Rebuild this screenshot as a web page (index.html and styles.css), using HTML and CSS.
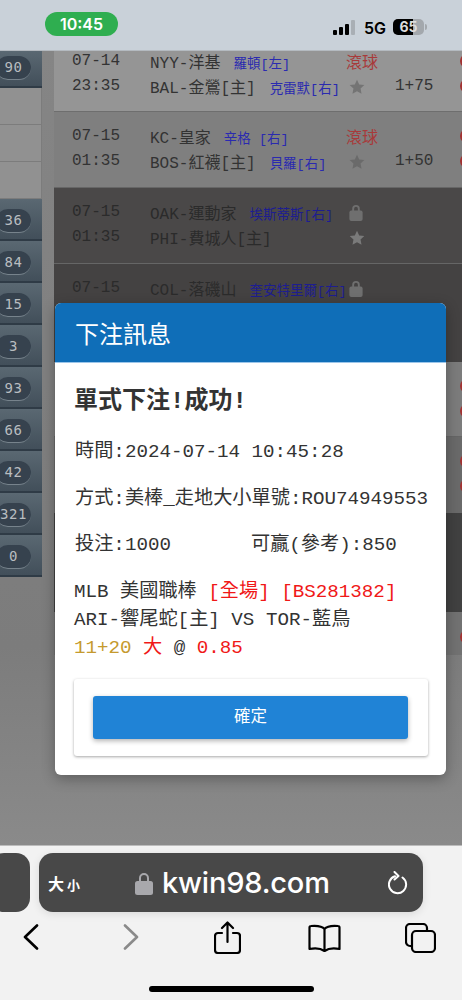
FILE: index.html
```html
<!DOCTYPE html>
<html lang="zh-Hant">
<head>
<meta charset="utf-8">
<title>下注訊息</title>
<link rel="stylesheet" href="styles.css">
</head>
<body>

<div class="status_bar">
	<div class="status_time">10:45</div>
	<div class="status_right">
		<svg class="status_signal" width="23" height="15" viewBox="0 0 23 15">
			<rect x="0" y="10" width="4" height="5" rx="1" fill="#000"/>
			<rect x="6" y="7" width="4" height="8" rx="1" fill="#000"/>
			<rect x="12" y="4" width="4" height="11" rx="1" fill="#000"/>
			<rect x="18" y="0" width="4" height="15" rx="1" fill="#a9afb5"/>
		</svg>
		<span class="status_net">5G</span>
		<div class="status_batt"><div class="status_fill"></div><span class="status_pct">65</span></div>
		<div class="status_tip"></div>
	</div>
</div>

<div class="page">
	<div class="side">
		<div class="side_dark side_first"><span class="badge">90</span></div>
		<div class="side_light"></div>
		<div class="side_light"></div>
		<div class="side_light"></div>
		<div class="side_dark"><span class="badge">36</span></div>
		<div class="side_dark"><span class="badge">84</span></div>
		<div class="side_dark"><span class="badge">15</span></div>
		<div class="side_dark"><span class="badge">3</span></div>
		<div class="side_dark"><span class="badge">93</span></div>
		<div class="side_dark"><span class="badge">66</span></div>
		<div class="side_dark"><span class="badge">42</span></div>
		<div class="side_dark"><span class="badge">321</span></div>
		<div class="side_dark"><span class="badge">0</span></div>
	</div>

	<div class="list">
		<div class="row row_a">
			<div class="date">07-14</div>
			<div class="team">NYY-洋基<span class="pitcher p_gap1">羅頓[左]</span></div>
			<div class="live">滾球</div>
			<div></div>
			<div class="dot"></div>
			<div class="date">23:35</div>
			<div class="team">BAL-金鶯[主]<span class="pitcher p_gap2">克雷默[右]</span></div>
			<div class="ico"><svg class="star" viewBox="0 0 24 24"><path d="M12 1l3.3 7.2 7.7.9-5.7 5.3 1.5 7.8L12 18.400l-6.800 3.800 1.500-7.800L1 9.100l7.700-.9z"/></svg></div>
			<div class="score">1+75</div>
			<div class="dot"></div>
		</div>
		<div class="row row_b">
			<div class="date">07-15</div>
			<div class="team">KC-皇家<span class="pitcher p_gap3">辛格 [右]</span></div>
			<div class="live">滾球</div>
			<div></div>
			<div class="dot"></div>
			<div class="date">01:35</div>
			<div class="team">BOS-紅襪[主]<span class="pitcher p_gap2">貝羅[右]</span></div>
			<div class="ico"><svg class="star" viewBox="0 0 24 24"><path d="M12 1l3.3 7.2 7.7.9-5.7 5.3 1.500 7.800L12 18.400l-6.800 3.800 1.500-7.800L1 9.100l7.700-.9z"/></svg></div>
			<div class="score">1+50</div>
			<div class="dot"></div>
		</div>
		<div class="row row_c">
			<div class="date">07-15</div>
			<div class="team">OAK-運動家<span class="pitcher p_gap1">埃斯蒂斯[右]</span></div>
			<div class="ico"><svg class="lock" viewBox="0 0 14 18"><path d="M3 8V5a4 4 0 0 1 8 0v3h-2V5a2 2 0 0 0-4 0v3z"/><rect y="7" width="14" height="11" rx="2"/></svg></div>
			<div></div>
			<div></div>
			<div class="date">01:35</div>
			<div class="team">PHI-費城人[主]</div>
			<div class="ico"><svg class="star" viewBox="0 0 24 24"><path d="M12 1l3.3 7.2 7.7.9-5.7 5.300 1.500 7.800L12 18.400l-6.800 3.800 1.500-7.800L1 9.100l7.700-.9z"/></svg></div>
			<div></div>
			<div></div>
		</div>
		<div class="row row_d">
			<div class="date">07-15</div>
			<div class="team">COL-落磯山<span class="pitcher p_gap1">奎安特里爾[右]</span></div>
			<div class="ico"><svg class="lock" viewBox="0 0 14 18"><path d="M3 8V5a4 4 0 0 1 8 0v3h-2V5a2 2 0 0 0-4 0v3z"/><rect y="7" width="14" height="11" rx="2"/></svg></div>
		</div>
		<div class="row row_e"><div class="dot dot_col"></div><div class="dot dot_col"></div></div>
		<div class="row row_f"><div class="dot dot_col"></div><div class="dot dot_col"></div></div>
		<div class="row row_g"></div>
		<div class="row row_h"><div class="dot dot_col"></div></div>
	</div>

	<div class="modal">
		<div class="modal_head">下注訊息</div>
		<div class="modal_body">
			<h2 class="modal_title">單式下注!成功!</h2>
			<p class="line">時間:2024-07-14 10:45:28</p>
			<p class="line">方式:美棒_走地大小單號:ROU74949553</p>
			<p class="line">投注:1000<span class="win">可贏(參考):850</span></p>
			<div class="detail">
				<div>MLB 美國職棒 <span class="red">[全場] [BS281382]</span></div>
				<div>ARI-響尾蛇[主] VS TOR-藍鳥</div>
				<div><span class="gold">11+20</span> <span class="red">大</span> @ <span class="red">0.85</span></div>
			</div>
			<div class="btn_card"><button class="btn">確定</button></div>
		</div>
	</div>
</div>

<div class="toolbar">
	<div class="url_row">
		<div class="tab_stub"></div>
		<div class="url_bar">
			<span class="aa"><b>大</b><small>小</small></span>
			<div class="url_mid">
				<svg class="url_lock" viewBox="0 0 18 24"><path d="M4 11V7a5 5 0 0 1 10 0v4h-2V7a3 3 0 0 0-6 0v4z"/><rect y="10" width="18" height="14" rx="2.500"/></svg>
				<span class="url_text">kwin98.com</span>
			</div>
			<svg class="reload" viewBox="0 0 20 24" fill="none" stroke="#fff" stroke-width="2" stroke-linecap="round" stroke-linejoin="round"><path d="M14.500 6.500A8.600 8.600 0 1 1 7 5.300"/><path d="M6.500 1l4 4-4 3.500"/></svg>
		</div>
	</div>
	<div class="nav">
		<svg class="nav_back" viewBox="0 0 16 26" fill="none" stroke="#000" stroke-width="2.600" stroke-linecap="round" stroke-linejoin="round"><path d="M14 1.500L2 13l12 11.500"/></svg>
		<svg class="nav_fwd" viewBox="0 0 16 26" fill="none" stroke="#8a8a8a" stroke-width="2.600" stroke-linecap="round" stroke-linejoin="round"><path d="M2 1.500L14 13 2 24.500"/></svg>
		<svg class="nav_share" viewBox="0 0 27 33" fill="none" stroke="#000" stroke-width="2.200" stroke-linecap="round" stroke-linejoin="round"><path d="M8 12H4a3 3 0 0 0-3 3v14a3 3 0 0 0 3 3h19a3 3 0 0 0 3-3V15a3 3 0 0 0-3-3h-4"/><path d="M13.500 21V2M8 7l5.500-5.500L19 7"/></svg>
		<svg class="nav_book" viewBox="0 0 33 28" fill="none" stroke="#000" stroke-width="2.200" stroke-linejoin="round" stroke-linecap="round"><path d="M16.500 5C14 2 9 1.500 3 2 2 2 1.500 2.600 1.500 3.500V25c5-1 11-.8 15 2 4-2.800 10-3 15-2V3.500c0-.9-.5-1.500-1.500-1.500-6-.5-11 0-13.500 3zM16.500 5v22"/></svg>
		<svg class="nav_tabs" viewBox="0 0 31 30" fill="none" stroke="#000" stroke-width="2.200" stroke-linejoin="round"><path d="M6 23H5a4 4 0 0 1-4-4V5a4 4 0 0 1 4-4h13a4 4 0 0 1 4 4v2"/><rect x="7" y="8" width="23" height="21" rx="4"/></svg>
	</div>
	<div class="home_bar"></div>
</div>

</body>
</html>
```

FILE: styles.css
```css
*{ margin:0; padding:0; box-sizing:border-box; }
html,body{ width:462px; height:1000px; overflow:hidden; }
body{
	background:#f2f2f2;
	font-family:"Liberation Mono","Noto Sans CJK TC",monospace;
	color:#333;
}

/* status bar */
.status_bar{
	height:51px;
	background:#c9d1d9;
	border-bottom:1px solid #b4bac0;
	display:flex;
	justify-content:space-between;
	padding:12px 34px 0 45px;
}
.status_time{
	width:73px;
	height:24px;
	border-radius:12px;
	background:#2fae50;
	color:#fff;
	font:600 16px/24px Inter,"Liberation Sans",sans-serif;
	text-align:center;
}
.status_right{
	display:flex;
	align-items:center;
	height:20px;
	margin-top:5px;
}
.status_net{
	font:600 16px/20px Inter,"Liberation Sans",sans-serif;
	color:#000;
	margin:1px 7px 0 8px;
}
.status_batt{
	position:relative;
	width:31px;
	height:16px;
	border-radius:5px;
	background:#a3a8ad;
	overflow:hidden;
}
.status_tip{
	width:2px;
	height:6px;
	margin-left:1px;
	border-radius:0 2px 2px 0;
	background:#a3a8ad;
	margin-right:1px;
}
.status_fill{ width:20px; height:16px; background:#000; }
.status_pct{
	position:absolute;
	left:0;
	top:0;
	width:31px;
	text-align:center;
	font:700 14px/16px Inter,"Liberation Sans",sans-serif;
	color:#ddd;
}

/* page under the dialog */
.page{
	position:relative;
	height:794px;
	display:flex;
	overflow:hidden;
	background:linear-gradient(#858585,#7c7c7c 75%,#8a8a8a);
}
.side{ width:42px; margin-right:12px; flex:none; }
.side_dark{
	height:42px;
	padding-top:10px;
	background:linear-gradient(#5a6872,#424f5a);
	border-bottom:2px solid #2f3b46;
	overflow:hidden;
}
.side_first{ height:37px; padding-top:5px; }
.side_light{
	height:37px;
	background:#919191;
	border-right:1px solid #7c7c7c;
	border-bottom:1px solid #7c7c7c;
}
.badge{
	display:block;
	width:35px;
	height:24px;
	margin-left:-4px;
	border-radius:12px;
	background:#36424e;
	border-bottom:1px solid #77838c;
	color:#b9bdc0;
	font:14px/22px "DejaVu Sans Mono",monospace;
	letter-spacing:.5px;
	text-align:center;
}

.list{ flex:1; margin-top:-14px; overflow:hidden; }
.row{
	display:grid;
	grid-template-columns:78px 196px 49px 65px 14px;
	grid-auto-rows:24.5px;
	align-items:center;
	padding:12px 0 0 18px;
	border-bottom:1px solid #6e6e6e;
	font-size:16px;
	color:#333;
}
.row_a{ height:75px; background:#959595; }
.row_b{ height:76px; background:#7f7f7f; border-bottom-color:#666; }
.row_c{ height:76px; background:#4a4848; border-bottom-color:#666; }
.row_d{ height:98px; background:#444242; border-bottom:0; }
.row_e{ height:75px; background:#7c7c7c; border-bottom-color:#666; }
.row_f{ height:76px; background:#6a6a6a; border-bottom:0; }
.row_g{ height:99px; background:#414141; border-bottom:0; }
.row_h{ height:43px; background:#727272; border-bottom:0; padding-top:13px; }
.row_c .date,.row_c .team,.row_d .date,.row_d .team{ color:#2b2b2b; }

.date{ white-space:nowrap; }
.team{ white-space:nowrap; }
.pitcher{
	font-size:13.500px;
	color:#2a2ab0;
}
.row_c .pitcher,.row_d .pitcher{ color:#1d1d90; }
.p_gap1{ margin-left:13px; }
.p_gap2{ margin-left:14px; }
.p_gap3{ margin-left:13px; }
.live{ color:#a83a3a; font-size:16px; }
.ico{ padding-left:3px; display:flex; }
.star{ width:16px; height:16px; fill:#747474; margin-top:2px; }
.row_b .star{ fill:#6a6a6a; }
.row_c .star{ fill:#7a7a7a; margin-top:2px; }
.lock{ width:14px; height:17px; fill:#6f6f6f; }
.dot{ width:14px; height:14px; border-radius:50%; background:#a33232; }
.dot_col{ grid-column:5; }

/* dialog */
.modal{
	position:absolute;
	left:55px;
	top:252px;
	width:391px;
	background:#fff;
	border-radius:6px;
	box-shadow:0 4px 14px rgba(0,0,0,.3);
	overflow:hidden;
}
.modal_head{
	height:60px;
	padding:12px 20px 0;
	background:#0f6eb8;
	border-bottom:1px solid #9cc6ea;
	color:#fff;
	font:24px/36px "Noto Sans CJK TC",sans-serif;
}
.modal_body{ padding:21px 18px 19px 19px; }
.modal_title{
	font-size:24px;
	line-height:36px;
	font-weight:700;
	color:#333;
	margin-bottom:18px;
}
.line{
	font-size:19.2px;
	line-height:28px;
	margin-left:1px;
	margin-bottom:18.5px;
	white-space:nowrap;
}
.win{ margin-left:80px; }
.detail{
	font-size:19.2px;
	line-height:28px;
	margin-bottom:17.5px;
	white-space:nowrap;
}
.red{ color:#f01818; }
.gold{ color:#c59a2e; }
.btn_card{
	height:77px;
	padding:17px 20px 17px 19px;
	border-radius:3px;
	background:#fff;
	box-shadow:0 1px 3px rgba(0,0,0,.35);
}
.btn{
	display:block;
	width:100%;
	height:43px;
	padding-bottom:5px;
	border:0;
	border-radius:3px;
	background:#2083d6;
	color:#fff;
	font:400 16.5px/38px "Noto Sans CJK TC",sans-serif;
	box-shadow:0 2px 5px rgba(0,0,0,.3);
}

/* browser toolbar */
.toolbar{
	position:relative;
	height:155px;
	background:#f2f2f2;
	border-top:1px solid #bcbcbc;
	padding-top:7px;
}
.url_row{ display:flex; gap:9px; margin-left:-10px; }
.tab_stub{ width:40px; height:59px; border-radius:14px; background:#484848; flex:none; }
.url_bar{
	width:384px;
	height:59px;
	border-radius:14px;
	background:#484848;
	color:#fff;
	display:flex;
	align-items:center;
	padding:0 15px 0 9px;
	box-shadow:0 2px 8px rgba(0,0,0,.1);
}
.aa{ font-family:"Noto Sans CJK TC",sans-serif; width:61px; white-space:nowrap; }
.aa b{ font-size:16px; }
.aa small{ font-size:13px; font-weight:700; margin-left:3px; }
.url_mid{ flex:1; display:flex; align-items:center; margin-left:26px; gap:9px; }
.url_lock{ width:18px; height:24px; fill:#a8a8ac; margin-top:1px; }
.url_text{ font:500 29px/36px Inter,"Liberation Sans",sans-serif; letter-spacing:-.2px; }
.reload{ width:20px; height:24px; }

.nav{ position:relative; height:34px; margin-top:7px; display:flex; }
.nav svg{ position:absolute; }
.nav_back{ left:23px; top:5px; width:16px; height:26px; }
.nav_fwd{ left:123px; top:5px; width:16px; height:26px; }
.nav_share{ left:214px; top:2px; width:27px; height:33px; }
.nav_book{ left:308px; top:5px; width:33px; height:28px; }
.nav_tabs{ left:405px; top:4px; width:31px; height:30px; }
.home_bar{
	position:absolute;
	left:149px;
	top:140px;
	width:165px;
	height:6px;
	border-radius:3px;
	background:#000;
}
```
